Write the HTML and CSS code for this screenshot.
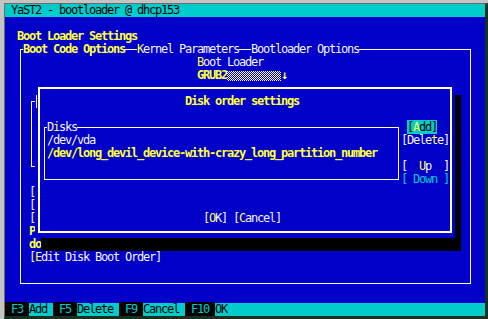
FILE: index.html
```html
<!DOCTYPE html>
<html lang="en">
<head>
  <meta charset="UTF-8" />
  <title>YaST2 - bootloader @ dhcp153</title>
  <link rel="stylesheet" href="styles.css">
</head>
<body>
  <div class="window">
    <div class="screen">
      <div class="titlebar">YaST2 - bootloader @ dhcp153</div>
      <div class="row"></div>
      <div class="row heading">Boot Loader Settings</div>

      <div class="frame">
        <div class="tabs">
          <span class="tab active">Boot Code Options</span>
          <span class="tab"><span class="hot">K</span>ernel Parameters</span>
          <span class="tab">Boot<span class="hot">l</span>oader Options</span>
        </div>
        <div class="row col32"><span class="hot">B</span>oot Loader</div>
        <div class="row col32 combo"><span class="combo-value">GRUB2</span><svg class="combo-fill" width="54" height="10" viewBox="0 0 54 10" shape-rendering="crispEdges"><defs><pattern id="dither" width="2" height="2" patternUnits="userSpaceOnUse"><rect width="2" height="2" fill="#0000c8"/><rect width="1" height="1" fill="#fff"/><rect x="1" y="1" width="1" height="1" fill="#fff"/></pattern></defs><rect width="54" height="10" fill="url(#dither)"/></svg><span class="combo-arrow">↓</span></div>
        <div class="bracket"></div>
        <div class="row col4">[</div>
        <div class="row col4">[</div>
        <div class="row col4">[</div>
        <div class="row col4 strong">P</div>
        <div class="row col4 strong">do</div>
        <div class="row col4">[<span class="hot">E</span>dit Disk Boot Order]</div>
      </div>

      <div class="footer"><span class="key"> F3 </span>Add <span class="key"> F5 </span>Delete <span class="key"> F9 </span>Cancel <span class="key"> F10 </span>OK</div>

      <!-- popup over the main screen -->
      <div class="dialog">
        <span class="dialog-mark"></span>
        <div class="dialog-frame">
          <div class="row dialog-title">Disk order settings</div>
          <div class="row"></div>
          <div class="dialog-body">
            <div class="disks">
              <div class="row disks-label"><span class="label-bg">D<span class="hot">i</span>sks</span></div>
              <div class="row">/dev/vda</div>
              <div class="row strong">/dev/long_devil_device-with-crazy_long_partition_number</div>
            </div>
            <div class="buttons">
              <div class="row"> <span class="btn-focus">[<span class="hot">A</span>dd]</span></div>
              <div class="row">[Dele<span class="hot">t</span>e]</div>
              <div class="row"></div>
              <div class="row">[  <span class="hot">U</span>p  ]</div>
              <div class="row disabled">[ Down ]</div>
            </div>
          </div>
          <div class="row"></div>
          <div class="row"></div>
          <div class="row actions">[<span class="hot">O</span>K] [<span class="hot">C</span>ancel]</div>
        </div>
      </div>
    </div>
  </div>
</body>
</html>
```

FILE: styles.css
```css
body {
  margin: 0;
  background: #c4c4c4;
}
.window {
  width: 480px;
  margin: 3px 0 0 4px;
  border-top: 1px solid #6c6c6c;
  border-left: 1px solid #6c6c6c;
  border-right: 3px solid #17301f;
  border-bottom: 3px solid #17301f;
}
.screen {
  position: relative;
  display: flex;
  flex-direction: column;
  height: 312px;
  background: #0000c8;
  color: #f4f4f4;
  font-family: "DejaVu Sans Mono", "Liberation Mono", monospace;
  font-size: 12px;
  line-height: 13px;
  letter-spacing: -1.225px;
  overflow: hidden;
}
.row, .titlebar, .footer {
  height: 13px;
  white-space: pre;
}
.titlebar {
  background: #00cccc;
  color: #000;
  padding-left: 6px;
}
.heading {
  padding-left: 12px;
  color: #ffff40;
  font-weight: bold;
}
.hot {
  color: #ffff40;
}
.strong {
  color: #ffff40;
  font-weight: bold;
}

/* main frame with tabs on its top line */
.frame {
  box-sizing: border-box;
  width: 451px;
  height: 235px;
  margin: 6px 0 0 15px;
  border: 1px solid #fff;
  padding-left: 2px;
}
.tabs {
  display: flex;
  gap: 12px;
  height: 13px;
  margin-top: -7px;
  white-space: pre;
}
.tab {
  background: #0000c8;
}
.tab.active {
  color: #ffff40;
  font-weight: bold;
}
.col32 {
  padding-left: 174px;
}
.col4 {
  padding-left: 6px;
}
.combo {
  display: flex;
  align-items: flex-end;
}
.combo-value {
  color: #ffff40;
  font-weight: bold;
}
.combo-fill {
  display: block;
  margin-bottom: 1px;
}
.combo-arrow {
  color: #ffff40;
  font-weight: bold;
}
.bracket {
  box-sizing: border-box;
  width: 5px;
  height: 66px;
  margin: 19px 0 19px 8px;
  border: 1px solid #fff;
  border-right: none;
}

.footer {
  margin-top: auto;
  background: #00cccc;
  color: #000;
}
.key {
  background: #000;
  color: #00cccc;
}

/* popup dialog */
.dialog {
  position: absolute;
  left: 30px;
  top: 78px;
  box-sizing: border-box;
  width: 420px;
  height: 156px;
  padding: 5px 3px;
  background: #0000c8;
  box-shadow: 6px 13px 0 #000;
}
.dialog-mark {
  position: absolute;
  left: 1px;
  top: 13px;
  width: 1px;
  height: 13px;
  background: #fff;
}
.dialog-frame {
  box-sizing: border-box;
  height: 100%;
  border: 2px solid #fff;
  padding-top: 6px;
}
.dialog-title {
  padding-left: 145px;
  color: #ffff40;
  font-weight: bold;
}
.dialog-body {
  display: flex;
  height: 65px;
}
.disks {
  box-sizing: border-box;
  width: 355px;
  height: 53px;
  margin: 6px 0 0 4px;
  border: 1px solid #fff;
  padding-left: 2px;
}
.disks-label {
  margin-top: -7px;
}
.label-bg {
  background: #0000c8;
}
.buttons {
  margin-left: 2px;
}
.btn-focus {
  background: #00cccc;
  color: #000;
}
.btn-focus .hot {
  color: #ffff40;
}
.disabled {
  color: #00cccc;
}
.actions {
  padding-left: 163px;
}
```
